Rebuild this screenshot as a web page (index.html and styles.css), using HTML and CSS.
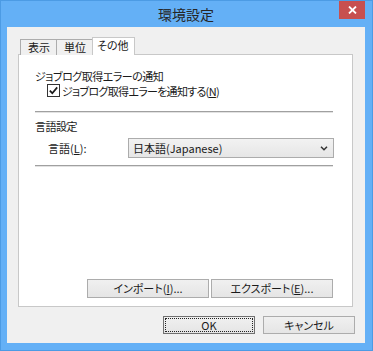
FILE: index.html
```html
<!DOCTYPE html>
<html lang="ja">
<head>
    <meta charset="UTF-8">
    <title>環境設定</title>
    <link rel="stylesheet" href="styles.css">
</head>
<body>
    <div class="window">
        <div class="titlebar">
            <span class="title">環境設定</span>
            <div class="close">
                <svg width="9" height="8" viewBox="0 0 9 8"><path d="M1 0.5 L8 7.5 M8 0.5 L1 7.5" stroke="#fff" stroke-width="1.8"/></svg>
            </div>
        </div>

        <div class="client">
            <div class="tabs">
                <div class="tab">表示</div>
                <div class="tab">単位</div>
                <div class="tab active">その他</div>
            </div>

            <div class="panel">
                <div class="group-title">ジョブログ取得エラーの通知</div>
                <label class="check">
                    <span class="box">
                        <svg width="13" height="13" viewBox="0 0 13 13"><rect x="0.5" y="0.5" width="12" height="12" fill="#fff" stroke="#333"/><path d="M2.8 6.6 L5.3 9.2 L10.2 3.4" fill="none" stroke="#1a1a1a" stroke-width="1.7"/></svg>
                    </span>
                    <span class="check-text">ジョブログ取得エラーを通知する(<u>N</u>)</span>
                </label>

                <div class="sep first"></div>

                <div class="group-title">言語設定</div>
                <div class="field">
                    <span class="field-label">言語(<u>L</u>):</span>
                    <div class="combo">
                        <span>日本語(Japanese)</span>
                        <svg width="8" height="5" viewBox="0 0 8 5"><path d="M1 0.8 L4 3.8 L7 0.8" fill="none" stroke="#333" stroke-width="1.5"/></svg>
                    </div>
                </div>

                <div class="sep"></div>

                <div class="panel-buttons">
                    <button class="btn wide">インポート(<u>I</u>)...</button>
                    <button class="btn wide">エクスポート(<u>E</u>)...</button>
                </div>
            </div>

            <div class="dialog-buttons">
                <button class="btn default">OK</button>
                <button class="btn">キャンセル</button>
            </div>
        </div>
    </div>
</body>
</html>
```

FILE: styles.css
```css
body {
    margin: 0;
    padding: 0;
    font-family: "Noto Sans CJK JP", "Noto Sans", sans-serif;
    font-size: 11px;
    color: #1a1a1a;
}

.window {
    width: 373px;
    height: 351px;
    box-sizing: border-box;
    background-color: #64b0f6;
    border: 1px solid #4c9be4;
    display: flex;
    flex-direction: column;
}

.titlebar {
    height: 26px;
    display: flex;
    align-items: flex-start;
    padding-left: 32px;
}

.title {
    flex: 1;
    text-align: center;
    font-size: 14px;
    line-height: 27px;
    color: #262626;
    font-feature-settings: "palt";
}

.close {
    width: 26px;
    height: 18px;
    margin-right: 7px;
    background-color: #c75050;
    display: flex;
    align-items: center;
    justify-content: center;
}

.client {
    flex: 1;
    margin: 0 7px 7px 6px;
    background-color: #f0f0f0;
    display: flex;
    flex-direction: column;
}

.tabs {
    display: flex;
    align-items: flex-end;
    padding: 10px 0 0 13px;
    margin-bottom: -1px;
    height: 18px;
    position: relative;
    z-index: 1;
}

.tab {
    height: 16px;
    box-sizing: border-box;
    padding: 0 6px 0 7px;
    line-height: 15px;
    border: 1px solid #acacac;
    border-bottom: none;
    background-color: #f0f0f0;
    margin-left: -1px;
}

.tab:first-child {
    margin-left: 0;
}

.tab.active {
    height: 18px;
    padding: 0 5px 0 4px;
    background-color: #fff;
    border-color: #c8c8c8;
    line-height: 15px;
    font-feature-settings: "palt";
}

.panel {
    height: 253px;
    box-sizing: border-box;
    margin: 0 12px 0 11px;
    border: 1px solid #c8c8c8;
    background-color: #fff;
    padding: 14px 19px 8px 16px;
    display: flex;
    flex-direction: column;
}

.group-title {
    line-height: 14px;
    height: 14px;
    font-feature-settings: "palt";
    letter-spacing: -0.5px;
}

.check {
    display: flex;
    align-items: center;
    height: 13px;
    margin: 1px 0 0 12px;
}

.check-text {
    font-feature-settings: "palt";
    letter-spacing: -0.7px;
}

.box {
    display: flex;
    margin-right: 2px;
}

.sep {
    height: 0;
    border-top: 1px solid #a0a0a0;
    border-bottom: 1px solid #e2e2e2;
    margin: 7px 0 6px;
}

.sep.first {
    margin-top: 14px;
}

.field {
    display: flex;
    align-items: center;
    margin-top: 5px;
}

.field-label {
    width: 80px;
    margin-left: 13px;
    font-feature-settings: "palt";
}

.combo {
    flex: 1;
    height: 20px;
    box-sizing: border-box;
    border: 1px solid #acacac;
    background: linear-gradient(#f2f2f2, #e6e6e6);
    display: flex;
    align-items: center;
    justify-content: space-between;
    padding: 0 5px 0 4px;
    margin-right: -1px;
}

.panel-buttons {
    margin-top: auto;
    display: flex;
    justify-content: flex-end;
    gap: 2px;
}

.btn {
    font-family: inherit;
    font-size: 11px;
    height: 18px;
    padding: 0;
    line-height: 15px;
    border: 1px solid #acacac;
    background: linear-gradient(#f0f0f0, #e5e5e5);
    color: #1a1a1a;
    width: 92px;
    font-feature-settings: "palt";
}

.btn.wide {
    width: 122px;
    height: 19px;
}

.btn.default {
    border-color: #707070;
    outline: 1px dotted #222;
    outline-offset: -3px;
}

.dialog-buttons {
    display: flex;
    justify-content: flex-end;
    gap: 8px;
    margin: 9px 10px 0 0;
}
```
